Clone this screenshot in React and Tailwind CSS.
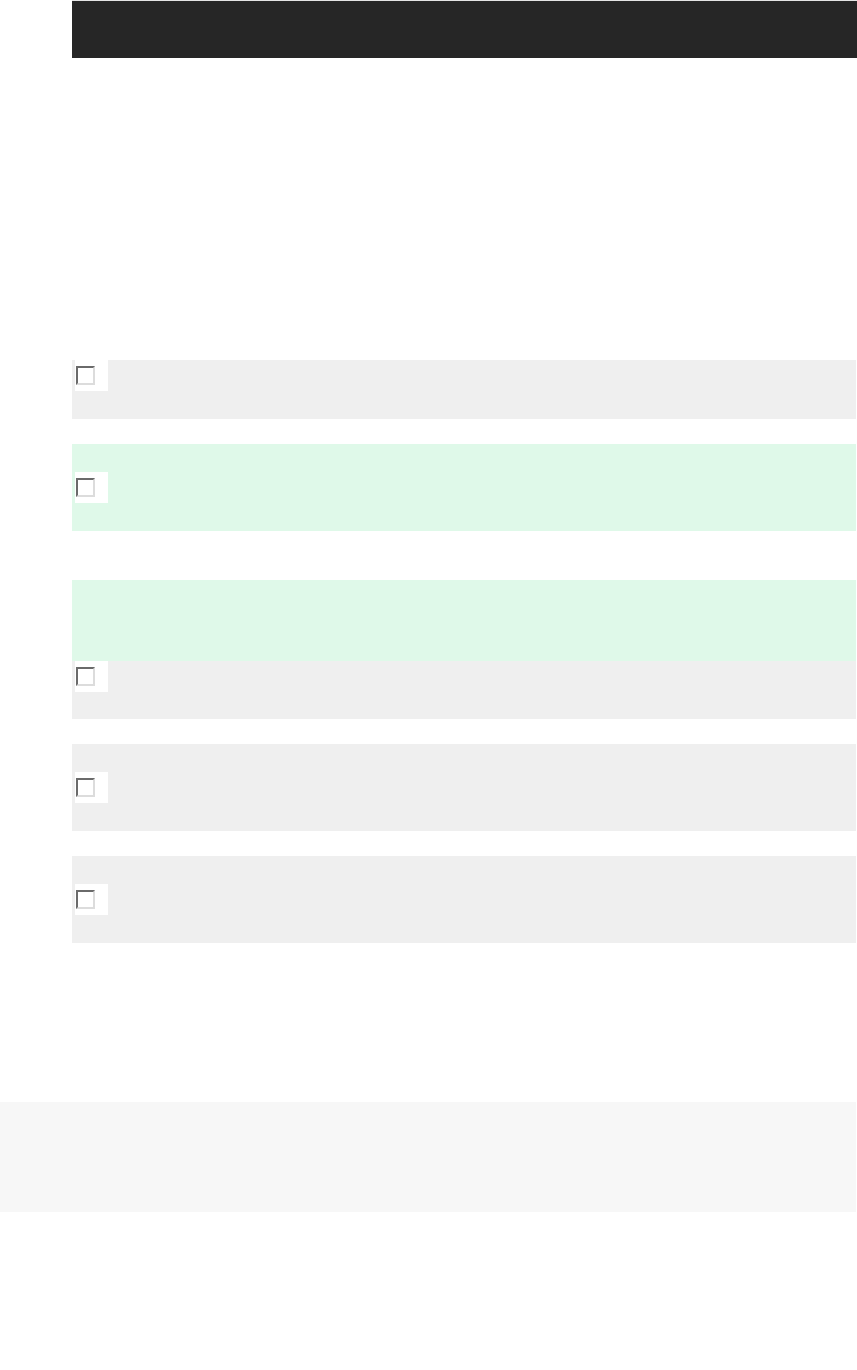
import React from "react";

function Check() {
  return (
    <div className="w-[33px] h-[31px] bg-white pl-px pt-[6px] shrink-0">
      <input
        type="checkbox"
        aria-label="select"
        className="block appearance-none m-0 w-[19px] h-[19px] bg-white border-2 border-t-[#6a6a6a] border-l-[#6a6a6a] border-r-[#dcdcdc] border-b-[#dcdcdc]"
      />
    </div>
  );
}

export default function App() {
  return (
    <div className="w-[857px] min-h-[1370px] bg-white font-['Liberation_Sans',sans-serif]">
      <header className="ml-[72px] w-[785px] h-[58px] border-t border-[#e4e4e4] bg-[#262626]" />

      <main className="ml-[72px] pt-[302px] flex flex-col">
        <div className="bg-[#efefef] h-[59px] w-[784px] pl-[3px] flex items-start">
          <Check />
        </div>

        <div className="mt-[25px] bg-[#dff9e9] h-[87px] w-[784px] pl-[3px] flex items-center">
          <Check />
        </div>

        <div className="mt-[49px] w-[784px] flex flex-col">
          <div className="bg-[#dff9e9] h-[81px]" />
          <div className="bg-[#efefef] h-[58px] pl-[3px] flex items-start">
            <Check />
          </div>
        </div>

        <div className="mt-[25px] bg-[#efefef] h-[87px] w-[784px] pl-[3px] flex items-center">
          <Check />
        </div>

        <div className="mt-[25px] bg-[#efefef] h-[87px] w-[784px] pl-[3px] flex items-center">
          <Check />
        </div>
      </main>

      <footer className="mt-[159px] w-[856px] h-[110px] bg-[#f7f7f7]" />
    </div>
  );
}
